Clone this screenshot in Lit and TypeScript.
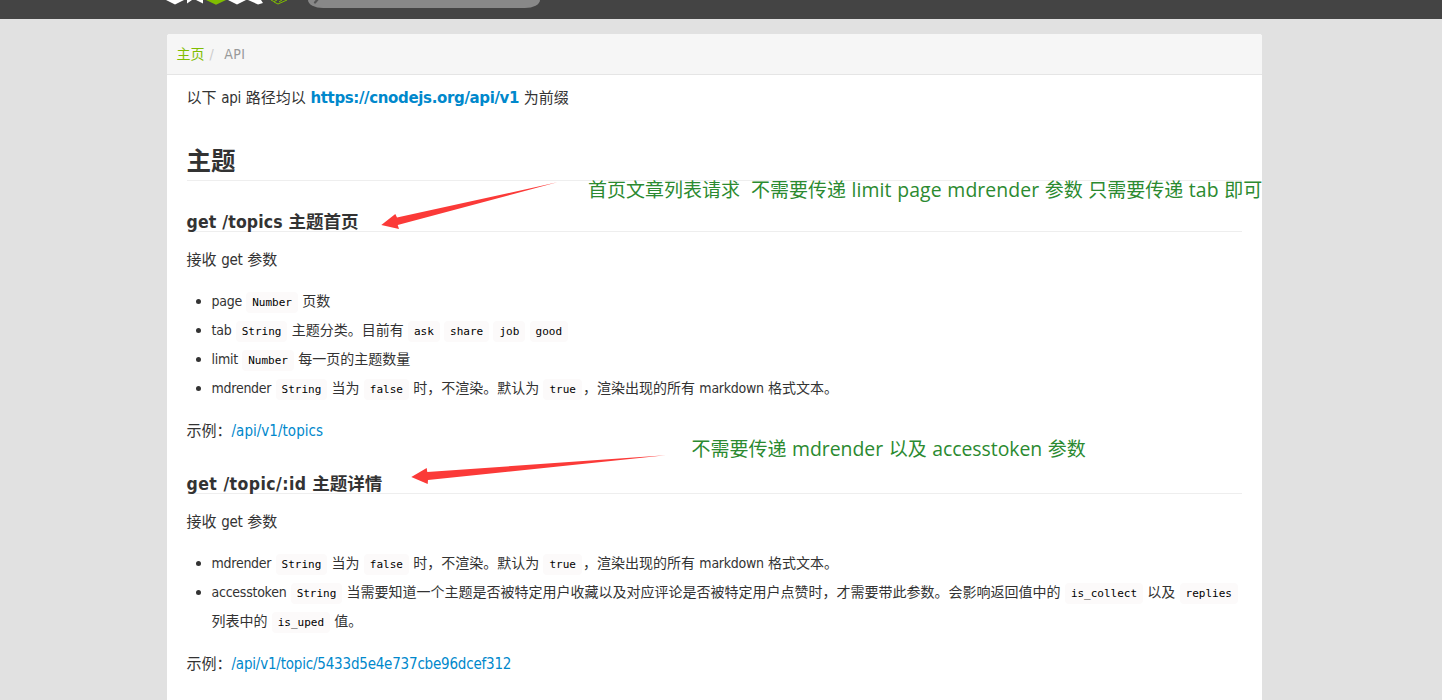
import { LitElement, html, css } from "lit";
import { customElement } from "lit/decorators.js";

@customElement("app-root")
export class AppRoot extends LitElement {
  static styles = css`
    :host {
      display: block;
      position: relative;
      height: 700px;
      overflow: hidden;
      background: #e1e1e1;
      color: #333;
      font-family: "DejaVu Sans Condensed", "Noto Sans CJK SC", sans-serif;
      font-size: 14px;
      letter-spacing: 0;
      word-spacing: 0.25px;
    }
    .l { letter-spacing: -0.25px; }
    a { text-decoration: none; color: #08c; }
    .nav { height: 19px; background: #444; display: flex; }
    .logo { margin-left: 160px; width: 140px; height: 19px; flex: none; }
    .search {
      margin-left: 8px; width: 232px; height: 8px; flex: none;
      background: #888; border-radius: 0 0 15px 15px / 0 0 8px 8px;
    }
    .search svg { display: block; }
    .panel { width: 1095px; margin: 15px 0 0 167px; height: 680px; background: #fff; border-radius: 3px 3px 0 0; }
    .crumbs {
      height: 40px; border-bottom: 1px solid #e5e5e5; background: #f6f6f6; border-radius: 3px 3px 0 0;
      display: flex; align-items: center; padding-left: 9.5px; color: #999; line-height: 20px;
    }
    .crumbs a { color: #80bd01; }
    .crumbs .l { letter-spacing: 0.4px; }
    .slash { color: #ccc; padding: 0 10.5px 0 5px; }
    .body { padding: 8px 20px 0 19.5px; }
    p { margin: 0; font-size: 15px; line-height: 30px; height: 30px; white-space: pre; word-spacing: 0.4px; }
    b { font-family: "DejaVu Sans", sans-serif; }
    b.l { letter-spacing: -0.35px; }
    h3, h4 { margin: 0; font-weight: 700; border-bottom: 1px solid #eee; white-space: pre; }
    h3 { margin-top: 27px; font-size: 24.5px; line-height: 44px; height: 40px; }
    h4 { margin-top: 30px; font-size: 17.5px; line-height: 22px; height: 20px; }
    h4 .l { letter-spacing: 0.15px; }
    h4.next .l { letter-spacing: 0.43px; }
    .short { letter-spacing: 0.03px; }
    .long { letter-spacing: -0.2px; }
    .after-list { margin-top: 13px; }
    .next { margin-top: 27px; }
    .intro { margin: 13px 0 11px; }
    ul { margin: 0; padding: 1px 0 0 25px; list-style: none; }
    li { line-height: 29px; position: relative; white-space: pre; }
    li::before {
      content: ""; position: absolute; left: -16px; top: 12px; width: 5px; height: 5px;
      border-radius: 50%; background: #333;
    }
    .row { display: block; height: 29px; }
    code {
      font: 11px/16px "DejaVu Sans Mono", monospace; color: #000; background: #fcfafa;
      padding: 4px 6px; border-radius: 4px; position: relative; top: -0.5px;
    }
    .comma { margin-left: 1.2px; }
    .note {
      position: absolute; white-space: pre; color: #2b8a30; font-size: 19px; line-height: 26px;
      font-family: "Open Sans", "Noto Sans CJK SC", sans-serif; word-spacing: 0.6px;
    }
    .n1 { left: 588px; top: 177px; }
    .n2 { left: 691.5px; top: 436px; }
    .note i { font-style: normal; font-size: 19.4px; line-height: 1; letter-spacing: -0.02px; }
    .n1 i { letter-spacing: 0.08px; }
    .arrows { position: absolute; left: 0; top: 0; width: 1442px; height: 700px; pointer-events: none; }
  `;

  private mdrender() {
    return html`<li><span class="row"><span class="l">mdrender</span> <code>String</code> 当为 <code>false</code> 时，不渲染。默认为 <code>true</code><span class="comma">，</span>渲染出现的所有 <span class="l">markdown</span> 格式文本。</span></li>`;
  }

  render() {
    return html`
      <div class="nav">
        <svg class="logo" viewBox="0 0 140 19">
          <g fill="#fff">
            <path d="M6 0H24L15 4.6Z" />
            <path d="M27 0H32L27 3.4ZM36 0H43V3.6Z" />
            <path d="M68 0H86L77 4.6Z" />
            <path d="M88 0H101L103 3L98 4.4Z" />
          </g>
          <path fill="#80bd01" d="M46 0H66L56 4.8Z" />
          <path fill="none" stroke="#80bd01" d="M111 0L114 1.6L117 0M114 2L118 4L127 0M119 2L122 0" />
        </svg>
        <div class="search">
          <svg width="20" height="8"><path d="M7 2.5L10 -1" stroke="#555" stroke-width="2.2" stroke-linecap="round" /></svg>
        </div>
      </div>
      <div class="panel">
        <div class="crumbs"><a>主页</a><span class="slash">/</span><span class="l">API</span></div>
        <div class="body">
          <p>以下 <span class="l">api</span> 路径均以 <a><b class="l">https://cnodejs.org/api/v1</b></a> 为前缀</p>
          <h3>主题</h3>
          <h4><span class="l">get /topics</span> 主题首页</h4>
          <p class="intro">接收 <span class="l">get</span> 参数</p>
          <ul>
            <li><span class="row"><span class="l">page</span> <code>Number</code> 页数</span></li>
            <li><span class="row"><span class="l">tab</span> <code>String</code> 主题分类。目前有 <code>ask</code> <code>share</code> <code>job</code> <code>good</code></span></li>
            <li><span class="row"><span class="l">limit</span> <code>Number</code> 每一页的主题数量</span></li>
            ${this.mdrender()}
          </ul>
          <p class="after-list">示例：<a class="short">/api/v1/topics</a></p>
          <h4 class="next"><span class="l">get /topic/:id</span> 主题详情</h4>
          <p class="intro">接收 <span class="l">get</span> 参数</p>
          <ul>
            ${this.mdrender()}
            <li><span class="row"><span class="l">accesstoken</span> <code>String</code> 当需要知道一个主题是否被特定用户收藏以及对应评论是否被特定用户点赞时，才需要带此参数。会影响返回值中的 <code>is_collect</code> 以及 <code>replies</code></span><span class="row">列表中的 <code>is_uped</code> 值。</span></li>
          </ul>
          <p class="after-list">示例：<a class="long">/api/v1/topic/5433d5e4e737cbe96dcef312</a></p>
        </div>
      </div>
      <svg class="arrows" viewBox="0 0 1442 700" fill="#fb3a38">
        <path d="M381.3 225L395.3 214L397 217.5L557.3 182.3L397.7 225L399 229Z" />
        <path d="M411.3 477L426.7 468L427.3 472L665.7 455.3L428 480L427.7 484Z" />
      </svg>
      <div class="note n1">首页文章列表请求  不需要传递 <i>limit page mdrender</i> 参数 只需要传递 <i>tab</i> 即可</div>
      <div class="note n2">不需要传递 <i>mdrender</i> 以及 <i>accesstoken</i> 参数</div>
    `;
  }
}
